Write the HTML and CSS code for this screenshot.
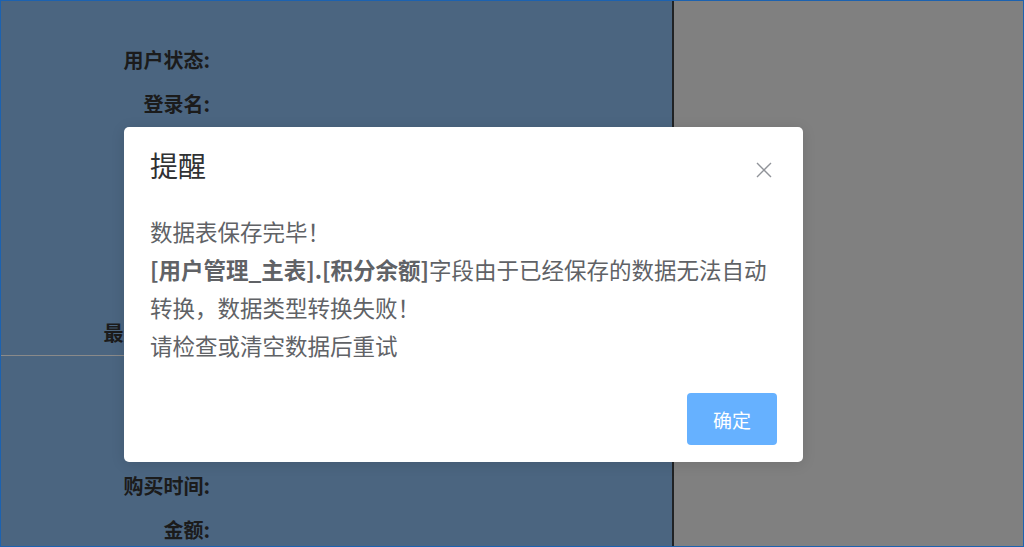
FILE: index.html
```html
<!DOCTYPE html>
<html lang="zh-CN">
<head>
<meta charset="utf-8">
<title>提醒</title>
<link rel="stylesheet" href="styles.css">
</head>
<body>
<div class="screen">
  <div class="panel-left">
    <div class="section section-top">
      <div class="row"><span class="label">用户状态:</span></div>
      <div class="row"><span class="label">登录名:</span></div>
      <div class="row"><span class="label">手机号:</span></div>
      <div class="row"><span class="label">邮箱:</span></div>
      <div class="row row-tall"><span class="label">备注:</span></div>
      <div class="row"><span class="label">最后修改人:</span></div>
    </div>
    <div class="section section-bottom">
      <div class="row"><span class="label">订单号:</span></div>
      <div class="row"><span class="label">商品:</span></div>
      <div class="row"><span class="label">购买时间:</span></div>
      <div class="row"><span class="label">金额:</span></div>
    </div>
  </div>
  <div class="panel-right"></div>

  <div class="dialog">
    <div class="dialog-header">
      <span class="dialog-title">提醒</span>
      <svg class="dialog-close" viewBox="0 0 16 16" width="16" height="16" aria-hidden="true">
        <path d="M1 1 L15 15 M15 1 L1 15" stroke="#909399" stroke-width="1.4" fill="none"/>
      </svg>
    </div>
    <div class="dialog-body">
      <p class="msg">数据表保存完毕！<br><b>[用户管理_主表].[积分余额]</b>字段由于已经保存的数据无法自动转换，数据类型转换失败！<br>请检查或清空数据后重试</p>
    </div>
    <div class="dialog-footer">
      <button class="btn-primary">确定</button>
    </div>
  </div>
</div>
</body>
</html>
```
FILE: styles.css
```css
* { box-sizing: border-box; }
html, body { margin: 0; padding: 0; }
body {
  font-family: "Noto Sans CJK SC", "Noto Sans", sans-serif;
  width: 1024px;
  height: 547px;
  overflow: hidden;
}
.screen {
  position: relative;
  width: 1024px;
  height: 547px;
  border: 1px solid #1c62b0;
  display: flex;
}
.panel-left {
  width: 673px;
  background: #4b6580;
  border-right: 2px solid #202224;
  display: flex;
  flex-direction: column;
}
.panel-right {
  flex: 1;
  background: #808080;
}
.section-top {
  padding-top: 37px;
  border-bottom: 1px solid #8a8a8a;
}
.section-bottom {
  padding-top: 20px;
}
.row {
  height: 44px;
  display: flex;
  align-items: center;
}
.row-tall {
  height: 97px;
  align-items: flex-start;
  padding-top: 10px;
}
.label {
  width: 209px;
  text-align: right;
  font-size: 20px;
  font-weight: bold;
  color: #1b1b1b;
  line-height: 24px;
}
.dialog {
  position: absolute;
  left: 123px;
  top: 126px;
  width: 679px;
  height: 335px;
  background: #fff;
  border-radius: 5px;
  box-shadow: 0 2px 14px rgba(0, 0, 0, 0.12);
  padding: 18px 26px 17px 26px;
  display: flex;
  flex-direction: column;
}
.dialog-header {
  display: flex;
  align-items: center;
  justify-content: space-between;
  height: 40px;
}
.dialog-title {
  font-size: 28px;
  color: #303133;
  line-height: 40px;
}
.dialog-close {
  width: 16px;
  height: 16px;
  margin-right: 5px;
  margin-top: 10px;
}
.dialog-body {
  padding-top: 27px;
  flex: 1;
}
.msg {
  margin: 0;
  font-size: 22.5px;
  line-height: 38px;
  color: #606266;
}
.msg b { font-weight: bold; }
.dialog-footer {
  display: flex;
  justify-content: flex-end;
}
.btn-primary {
  width: 90px;
  height: 52px;
  border: none;
  border-radius: 4px;
  background: #66b1ff;
  color: #fff;
  font-family: "Noto Sans CJK SC", "Noto Sans", sans-serif;
  font-size: 19px;
  padding: 0;
}
```
